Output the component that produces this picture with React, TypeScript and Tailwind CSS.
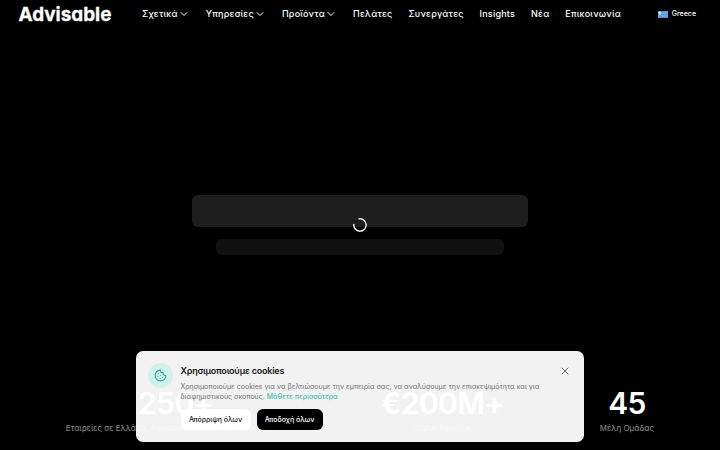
import { ChevronDown, Cookie, X } from "lucide-react";

const navItems = [
  { label: "Σχετικά", menu: true },
  { label: "Υπηρεσίες", menu: true },
  { label: "Προϊόντα", menu: true },
  { label: "Πελάτες" },
  { label: "Συνεργάτες" },
  { label: "Insights" },
  { label: "Νέα" },
  { label: "Επικοινωνία" },
];

function GreekFlag() {
  return (
    <svg viewBox="0 0 27 18" className="h-[7px] w-[10px]" preserveAspectRatio="none">
      <rect width="27" height="18" fill="#2f7fcb" />
      <path d="M10 3h17M10 7h17M0 11h27M0 15h27" stroke="#b5d6f2" strokeWidth="1.7" />
      <path d="M5 0v10M0 5h10" stroke="#fff" strokeWidth="2.6" />
    </svg>
  );
}

function Header() {
  return (
    <header className="flex h-7 items-center pl-[18.5px] pr-6 text-white">
      <a className="w-[123.5px] pt-px text-[18.9px] leading-7 font-bold [font-feature-settings:'cv11','ss03'] [-webkit-text-stroke:0.3px_white]">
        Advisable
      </a>
      <nav className="flex items-center gap-[15.9px]">
        {navItems.map((item) => (
          <a key={item.label} className="flex items-center gap-[0.2px] text-[9px] leading-4 font-medium tracking-[0.22px] whitespace-nowrap">
            {item.label}
            {item.menu && <ChevronDown className="size-[12px]" strokeWidth={2} />}
          </a>
        ))}
      </nav>
      <div className="ml-auto flex items-center gap-1 text-[7px] font-medium">
        <GreekFlag />
        Greece
      </div>
    </header>
  );
}

function Stat({ value, label, className }: { value: string; label: string; className: string }) {
  return (
    <div className={"flex flex-col items-center whitespace-nowrap " + className}>
      <div className="text-[30px] leading-[35px] font-semibold tracking-[-0.6px] text-white">{value}</div>
      <div className="mt-px text-[8px] leading-3 text-[#8f8f8f]">{label}</div>
    </div>
  );
}

function CookieBanner() {
  return (
    <section className="absolute top-[351px] left-[136px] flex h-[91px] w-[448px] gap-2 rounded-[7px] bg-white/95 pt-3 pr-3 pl-3 text-[#171717]">
      <div className="flex size-[24.5px] shrink-0 items-center justify-center rounded-full bg-[#d3f1ec]">
        <Cookie className="size-[13px] text-[#27a99a]" strokeWidth={2} />
      </div>
      <div className="min-w-0 flex-1">
        <div className="flex h-[15px] items-center justify-between pr-[1px]">
          <h2 className="text-[9px] leading-[14px] font-semibold tracking-[-0.22px]">Χρησιμοποιούμε cookies</h2>
          <X className="size-3 text-[#666]" strokeWidth={2} />
        </div>
        <p className="mt-[4px] text-[7px] leading-[10px] whitespace-nowrap text-[#737373]">
          Χρησιμοποιούμε cookies για να βελτιώσουμε την εμπειρία σας, να αναλύσουμε την επισκεψιμότητα και για
          <br />
          διαφημιστικούς σκοπούς. <a className="text-[#2bb5a5]">Μάθετε περισσότερα</a>
        </p>
        <div className="mt-[7px] flex gap-[6px] text-[7px] font-medium">
          <button className="h-[20.5px] w-[70px] rounded-[6px] bg-white pt-px tracking-[-0.04px]">Απόρριψη όλων</button>
          <button className="h-[20.5px] w-[66px] rounded-[6px] bg-black pt-px text-white">Αποδοχή όλων</button>
        </div>
      </div>
    </section>
  );
}

export default function App() {
  return (
    <div className="relative h-[450px] w-[720px] overflow-hidden bg-black font-['Inter','Noto_Sans',sans-serif]">
      <Header />
      <main className="flex flex-col items-center pt-[167px]">
        <div className="h-8 w-[336px] rounded-[6px] bg-[#1e1e1e]" />
        <div className="mt-3 h-4 w-[288px] rounded-[6px] bg-[#101010]" />
        <section className="mt-[131px] flex w-full pl-[66.5px]">
          <Stat value="250+" label="Εταιρείες σε Ελλάδα, Ρουμανία, Κύπρο και τη Βουλγαρία" className="w-[218px]" />
          <Stat value="€200M+" label="Digital Revenue" className="ml-[58px] w-[200px]" />
          <Stat value="45" label="Μέλη Ομάδας" className="ml-[44.5px] w-[80px]" />
        </section>
      </main>
      <svg className="absolute top-[218px] left-[353px] size-[14px]" viewBox="0 0 14 14" fill="none">
        <path d="M.9 5.8A6.2 6.2 0 1 0 5.4 1" stroke="#e5e5e5" strokeWidth="1.5" />
      </svg>
      <CookieBanner />
    </div>
  );
}
